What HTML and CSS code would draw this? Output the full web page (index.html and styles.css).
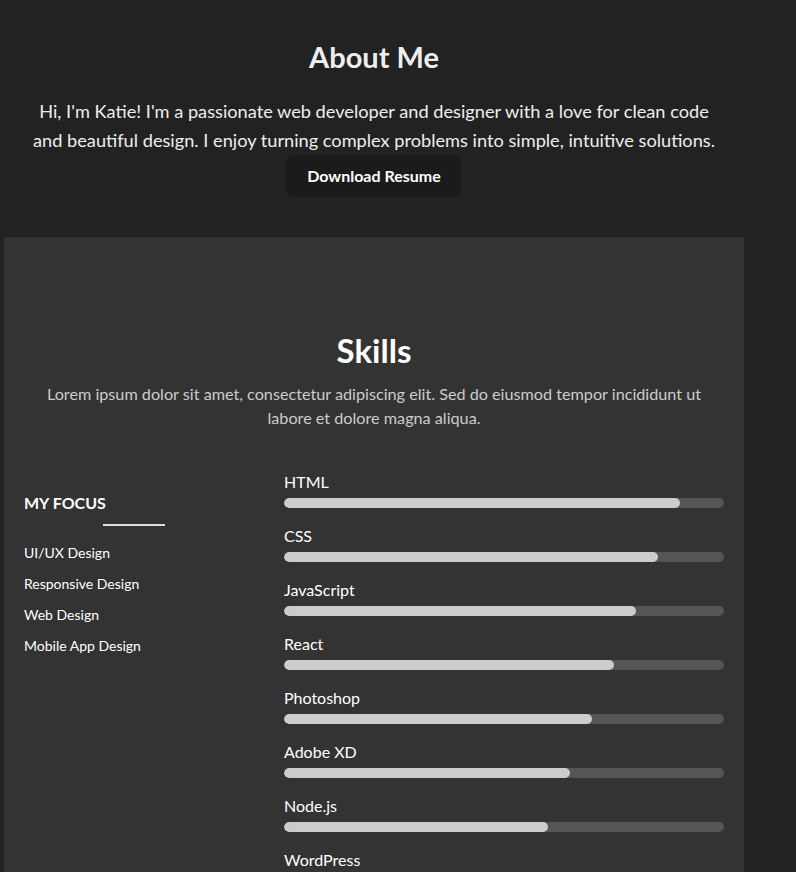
FILE: index.html
```html
<!DOCTYPE html>
<html lang="en">
<head>
<meta charset="utf-8">
<title>About Me</title>
<link rel="stylesheet" href="styles.css">
</head>
<body>
<div class="page">
  <section class="about">
    <h2 class="about-title">About Me</h2>
    <p class="about-text">Hi, I'm Katie! I'm a passionate web developer and designer with a love for clean code and beautiful design. I enjoy turning complex problems into simple, intuitive solutions.</p>
    <a class="btn" href="#">Download Resume</a>
  </section>
  <section class="skills">
    <h2 class="skills-title">Skills</h2>
    <p class="skills-intro">Lorem ipsum dolor sit amet, consectetur adipiscing elit. Sed do eiusmod tempor incididunt ut labore et dolore magna aliqua.</p>
    <div class="skills-grid">
      <div class="focus">
        <h3 class="focus-title">MY FOCUS</h3>
        <div class="focus-line"></div>
        <ul class="focus-list">
          <li>UI/UX Design</li>
          <li>Responsive Design</li>
          <li>Web Design</li>
          <li>Mobile App Design</li>
        </ul>
      </div>
      <div class="bars">
        <div class="skill"><div class="skill-name">HTML</div><div class="track"><div class="fill" style="width:90%"></div></div></div>
        <div class="skill"><div class="skill-name">CSS</div><div class="track"><div class="fill" style="width:85%"></div></div></div>
        <div class="skill"><div class="skill-name">JavaScript</div><div class="track"><div class="fill" style="width:80%"></div></div></div>
        <div class="skill"><div class="skill-name">React</div><div class="track"><div class="fill" style="width:75%"></div></div></div>
        <div class="skill"><div class="skill-name">Photoshop</div><div class="track"><div class="fill" style="width:70%"></div></div></div>
        <div class="skill"><div class="skill-name">Adobe XD</div><div class="track"><div class="fill" style="width:65%"></div></div></div>
        <div class="skill"><div class="skill-name">Node.js</div><div class="track"><div class="fill" style="width:60%"></div></div></div>
        <div class="skill"><div class="skill-name">WordPress</div><div class="track"><div class="fill" style="width:55%"></div></div></div>
      </div>
    </div>
  </section>
</div>
</body>
</html>
```
FILE: styles.css
```css
html, body {
  margin: 0;
  padding: 0;
  background: #222222;
  color: #eeeeee;
  font-family: Lato, "Open Sans", "Liberation Sans", sans-serif;
}
.page {
  width: 740px;
  margin-left: 4px;
}
.about {
  padding: 40px 20px 40px;
  text-align: center;
}
.about-title {
  margin: 0;
  font-size: 29px;
  line-height: 34px;
  font-weight: 700;
  color: #eeeeee;
}
.about-text {
  max-width: 690px;
  margin: 23px auto 0;
  font-size: 18.2px;
  line-height: 29px;
  color: #eeeeee;
}
.btn {
  display: inline-block;
  width: 176px;
  height: 42px;
  line-height: 42px;
  box-sizing: border-box;
  background: #1b1b1b;
  color: #ffffff;
  border-radius: 6px;
  font-size: 16px;
  font-weight: 700;
  text-decoration: none;
}
.skills {
  background: #333333;
  padding: 94px 20px 40px;
}
.skills-title {
  margin: 0;
  text-align: center;
  font-size: 33px;
  line-height: 38px;
  font-weight: 700;
  color: #ffffff;
}
.skills-intro {
  max-width: 670px;
  margin: 13px auto 0;
  text-align: center;
  font-size: 16.2px;
  line-height: 24px;
  color: #cccccc;
}
.skills-grid {
  display: grid;
  grid-template-columns: 1fr 2fr;
  column-gap: 40px;
  margin-top: 41px;
}
.focus-title {
  margin: 21px 0 0;
  font-size: 16px;
  line-height: 22px;
  font-weight: 700;
  color: #ffffff;
}
.focus-line {
  width: 62px;
  height: 2px;
  background: #dddddd;
  margin: 10px auto 0;
}
.focus-list {
  list-style: none;
  margin: 17px 0 0;
  padding: 0;
}
.focus-list li {
  font-size: 14px;
  line-height: 20px;
  margin-bottom: 11px;
  color: #ffffff;
}
.skill {
  margin-bottom: 17px;
}
.skill-name {
  font-size: 16px;
  line-height: 22px;
  color: #ffffff;
}
.track {
  margin-top: 5px;
  height: 10px;
  border-radius: 5px;
  background: #555555;
  overflow: hidden;
}
.fill {
  height: 100%;
  border-radius: 5px;
  background: #cccccc;
}
```
